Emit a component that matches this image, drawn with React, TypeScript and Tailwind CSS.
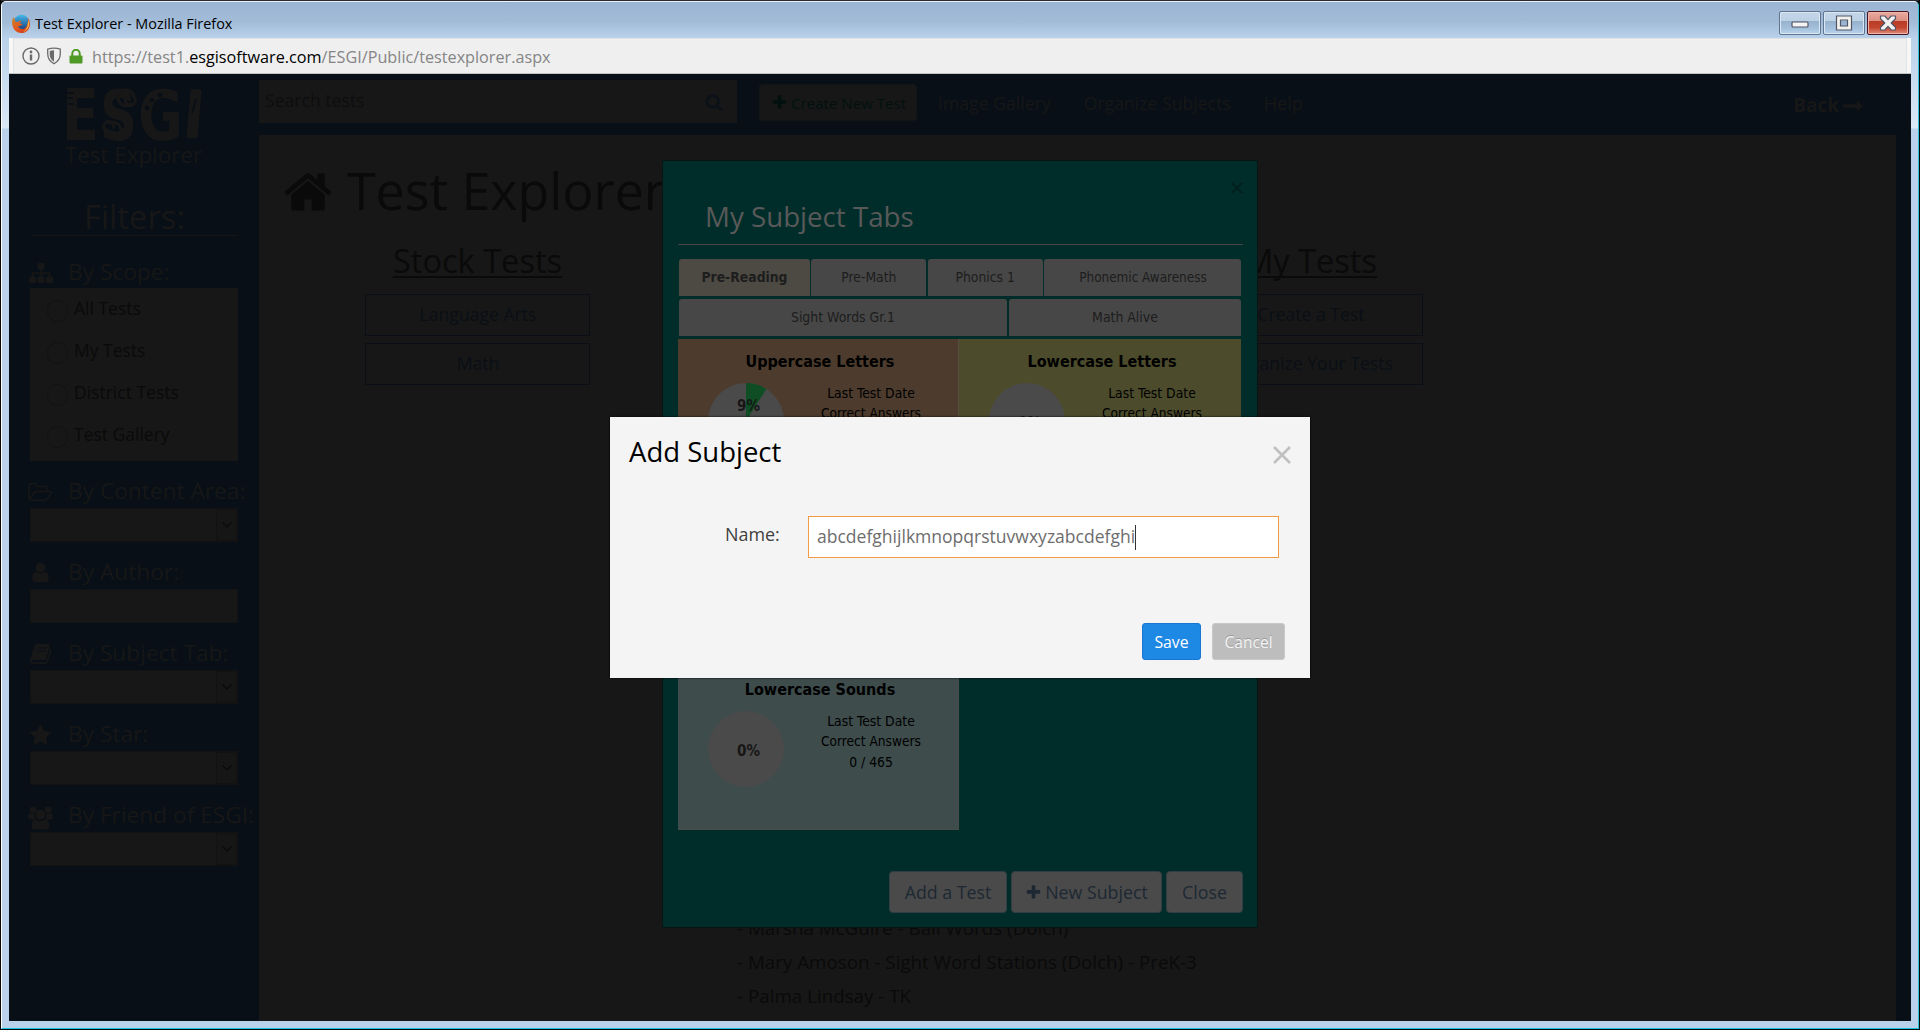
import React from 'react';

const plusPath =
  'M1600 736v192q0 40-28 68t-68 28h-416v416q0 40-28 68t-68 28h-192q-40 0-68-28t-28-68v-416h-416q-40 0-68-28t-28-68v-192q0-40 28-68t68-28h416v-416q0-40 28-68t68-28h192q40 0 68 28t28 68v416h416q40 0 68 28t28 68z';
const searchPath =
  'M1216 832q0-185-131.5-316.5t-316.5-131.5-316.5 131.5-131.5 316.5 131.5 316.5 316.5 131.5 316.5-131.5 131.5-316.5zm512 832q0 52-38 90t-90 38q-54 0-90-38l-343-342q-179 124-399 124-143 0-273.5-55.5t-225-150-150-225-55.5-273.5 55.5-273.5 150-225 225-150 273.5-55.5 273.5 55.5 225 150 150 225 55.5 273.5q0 220-124 399l343 343q37 37 37 90z';
const homePath =
  'M1472 992v480q0 26-19 45t-45 19h-384v-384h-256v384h-384q-26 0-45-19t-19-45v-480q0-1 .5-3t.5-3l575-474 575 474q1 2 1 6zm223-69l-62 74q-8 9-21 11h-3q-13 0-21-7l-692-577-692 577q-12 8-24 7-13-2-21-11l-62-74q-8-10-7-23.5t11-21.5l719-599q32-26 76-26t76 26l244 204v-195q0-14 9-23t23-9h192q14 0 23 9t9 23v408l219 182q10 8 11 21.5t-7 23.5z';
const userPath =
  'M1536 1399q0 109-62.5 187t-150.5 78h-854q-88 0-150.5-78t-62.5-187q0-85 8.5-160.5t31.5-152 58.5-131 94-89 134.5-34.5q131 128 313 128t313-128q76 0 134.5 34.5t94 89 58.5 131 31.5 152 8.5 160.5zm-256-887q0 159-112.5 271.5t-271.5 112.5-271.5-112.5-112.5-271.5 112.5-271.5 271.5-112.5 271.5 112.5 112.5 271.5z';
const starPath =
  'M1728 647q0 22-26 48l-363 354 86 500q1 7 1 20 0 21-10.5 35.5t-30.5 14.5q-19 0-40-12l-449-236-449 236q-22 12-40 12-21 0-31.5-14.5t-10.5-35.5q0-6 2-20l86-500-364-354q-25-27-25-48 0-37 56-46l502-73 225-455q19-41 49-41t49 41l225 455 502 73q56 9 56 46z';

function Glyph({ d, className }: { d: string; className: string }) {
  return (
    <svg viewBox="0 0 1792 1792" className={className} fill="currentColor">
      <path d={d} />
    </svg>
  );
}

function FirefoxIcon() {
  return (
    <svg viewBox="0 0 20 20" className="h-5 w-5">
      <defs>
        <linearGradient id="fox" x1="0" y1="0" x2="1" y2="1">
          <stop offset="0" stopColor="#c8862f" />
          <stop offset="0.5" stopColor="#e2571e" />
          <stop offset="1" stopColor="#c9301c" />
        </linearGradient>
        <linearGradient id="globe" x1="0" y1="0" x2="0" y2="1">
          <stop offset="0" stopColor="#45b8e8" />
          <stop offset="1" stopColor="#173a7d" />
        </linearGradient>
      </defs>
      <circle cx="10.5" cy="8.800" r="8" fill="url(#globe)" />
      <path
        d="M2.200 3.400C1 6 .9 8.300 1.300 11 2.200 15.800 5.800 19 10.300 19c4.700 0 8.300-3.500 8.600-8.300.1-2.900-.7-5.200-2.600-7.200.8 2 1 3.600.5 5.200-.5 3.300-2.700 6.400-5.600 6.300-2.200-.1-3.800-1.300-4.300-3 1 .5 2.100.3 3-.4.6-.5 1.400-.5 1.500-1 0-.6-1-1-2.100-.9-.5-1.200.1-2 1.300-2.900-1.600-.2-2.600.2-3.500 1.200-.9-.4-1.700-.3-2.300-.1C4 6 3.500 5 3.300 3.700z"
        fill="url(#fox)"
      />
      <path d="M18 6.500c1.200 5.500-1.500 10.300-6 11.700 3.300-2.300 4.900-5.500 4.900-9.400z" fill="#f9b63c" />
    </svg>
  );
}

function InfoIcon() {
  return (
    <svg viewBox="0 0 18 18" className="h-[18px] w-[18px]" fill="none" stroke="#6b6b6b" strokeWidth="1.400">
      <circle cx="9" cy="9" r="8" />
      <path d="M9 7.500v6" strokeWidth="2.400" />
      <circle cx="9" cy="5" r="1.400" fill="#6b6b6b" stroke="none" />
    </svg>
  );
}

function ShieldIcon() {
  return (
    <svg viewBox="0 0 16 18" className="h-[18px] w-4">
      <path d="M8 1.200c2.200 0 4.600.4 6.300 1v4.300c0 5-2 8-6.300 10.300C3.700 14.500 1.700 11.500 1.700 6.500V2.200C3.400 1.600 5.800 1.200 8 1.200z" fill="none" stroke="#6b6b6b" strokeWidth="1.300" />
      <path d="M8 3.300c-1.600 0-3.200.2-4.300.6v3c0 3.600 1.400 6 4.300 7.800z" fill="#6b6b6b" />
    </svg>
  );
}

function LockIcon() {
  return (
    <svg viewBox="0 0 14 15" className="h-[15px] w-[14px]">
      <path d="M3.300 8V4.500a3.700 3.700 0 0 1 7.400 0V8" fill="none" stroke="#4f9a27" strokeWidth="2" />
      <rect x=".5" y="6.500" width="13" height="8" rx="1" fill="#4f9a27" />
    </svg>
  );
}

function SitemapIcon() {
  return (
    <svg viewBox="0 0 24 20" className="h-5 w-6" fill="currentColor">
      <rect x="8.500" y="0" width="7" height="6.500" rx="1" />
      <rect x="0" y="13.500" width="7" height="6.500" rx="1" />
      <rect x="8.500" y="13.500" width="7" height="6.500" rx="1" />
      <rect x="17" y="13.500" width="7" height="6.500" rx="1" />
      <path d="M3.500 14v-4h17v4M12 6v8" fill="none" stroke="currentColor" strokeWidth="1.600" />
    </svg>
  );
}

function FolderIcon() {
  return (
    <svg viewBox="0 0 26 20" className="h-5 w-[25px]" fill="none" stroke="currentColor" strokeWidth="1.600" strokeLinejoin="round">
      <path d="M1.200 16.500V3.500q0-2 2-2h4q2 0 2 2v.8h8.500q2 0 2 2v3.200" />
      <path d="M1.500 17.500l5.200-6.800q1-1.200 2.500-1.200h14q2.200 0 1 1.700l-4.600 6q-1 1.300-2.600 1.300H3q-1.800 0-1.800-2" />
    </svg>
  );
}

function BookIcon() {
  return (
    <svg viewBox="0 0 22 20" className="h-5 w-[22px]">
      <path d="M7 0h11.500q1.800 0 1.300 1.800l-3.700 12.600q-.5 1.600-2.200 1.600H4q-2 0-2 1.300 0 1 1.800 1H15q1 0 1.400-1.200L20.300 4q1.500.7 1 2.200l-3.600 12q-.6 1.800-2.500 1.800H3.700Q0 20 0 16.500L4 2.300Q4.700 0 7 0z" fill="currentColor" />
      <path d="M8.500 4h8M7.600 7h8" stroke="#080f16" strokeWidth="1.100" />
    </svg>
  );
}

function UsersIcon() {
  return (
    <svg viewBox="0 0 25 24" className="h-6 w-[25px]" fill="currentColor">
      <circle cx="5" cy="4" r="3.400" />
      <circle cx="20" cy="4" r="3.400" />
      <path d="M2 7q3 1.800 5 .6Q6 11 7.500 13.500H3Q0 13.500 0 11q0-3 2-4zM23 7q-3 1.800-5 .6.9 3.400-.5 5.900H22q3 0 3-2.500 0-3-2-4z" />
      <circle cx="12.500" cy="8.700" r="4.900" />
      <path d="M7.600 13q2 2 4.900 2t4.900-2q4 .5 4 7.300 0 3.200-3.200 3.200H6.800q-3.200 0-3.200-3.200Q3.600 13.500 7.600 13z" />
    </svg>
  );
}

function Logo() {
  return (
    <svg viewBox="0 0 140 54" className="ml-[57px] mt-[13px] h-[54px] w-[140px] shrink-0 overflow-visible font-['DejaVu_Sans']" fill="#171717" fontWeight="bold">
      <text x="-4" y="53" fontSize="71" textLength="37" lengthAdjust="spacingAndGlyphs">E</text>
      <text x="34" y="53" fontSize="70" textLength="37" lengthAdjust="spacingAndGlyphs">S</text>
      <text x="72" y="53" fontSize="69" textLength="45" lengthAdjust="spacingAndGlyphs">G</text>
      <text x="117" y="51" fontSize="67" textLength="22" lengthAdjust="spacingAndGlyphs" transform="rotate(5 128 27)">I</text>
      <g fill="none" stroke="#171717" strokeWidth="3">
        <path d="M66 16a8 8 0 1 1 2-6 5 5 0 1 1-8 1" />
        <path d="M42 37a8 8 0 1 1-3 6 5 5 0 1 1 8-1" />
      </g>
      <g fill="#080f16">
        <circle cx="81" cy="21" r="2.200" />
        <circle cx="86" cy="13" r="2.200" />
        <circle cx="94" cy="8" r="2.200" />
      </g>
      <path d="M1 6h7M0 11h7M2 17h6M130 12l-4 14" stroke="#080f16" strokeWidth="1.800" />
    </svg>
  );
}

function TitleBar() {
  const frame =
    'flex h-6 w-[42px] items-center justify-center rounded-[2px] border border-[#5f7590] bg-[linear-gradient(#c3d6e9_0%,#bdd1e5_42%,#98b2ce_43%,#a3c0dc_75%,#bad4ec_100%)] shadow-[inset_0_0_0_1px_#dbe8f4]';
  return (
    <div className="flex h-9 shrink-0 items-center bg-linear-to-b from-[#9ab4d3] via-[#a2bcd8] via-55% to-[#b9d1ea] pr-[9px] pl-[9px]">
      <div className="mt-[7px]"><FirefoxIcon /></div>
      <div className="mt-[8px] ml-[4px] text-[14.4px] leading-5 whitespace-pre text-black">Test Explorer - Mozilla Firefox</div>
      <div className="mt-[6px] ml-auto flex gap-[2px]">
        <div className={frame}>
          <svg viewBox="0 0 18 8" className="mt-[3px] h-2 w-[18px]"><rect x="1" y="1" width="16" height="5" rx="1" fill="#f4f4f4" stroke="#535666" strokeWidth="1.200" /></svg>
        </div>
        <div className={frame}>
          <svg viewBox="0 0 18 16" className="-mt-[1px] h-4 w-[18px]"><path fillRule="evenodd" d="M1.500 1h15v14h-15zM5.500 5v6h7V5z" fill="#f1f1ee" stroke="#535666" strokeWidth="1.200" /></svg>
        </div>
        <div className="flex h-6 w-[42px] items-center justify-center rounded-[2px] border border-[#4a1420] bg-[linear-gradient(#e8aba1_0%,#dd8d80_42%,#b83c26_43%,#c2452d_70%,#e08b78_100%)] shadow-[inset_0_0_0_1px_#eeb5ab]">
          <svg viewBox="0 0 18 16" className="-mt-[1px] h-4 w-[18px]"><path d="M1.500 1h4.300L9 4.600 12.200 1h4.300v2.800L12.200 8l4.300 4.200V15h-4.300L9 11.400 5.800 15H1.500v-2.800L5.800 8 1.500 3.800z" fill="#f3f1f1" stroke="#535666" strokeWidth="1.200" strokeLinejoin="round" /></svg>
        </div>
      </div>
    </div>
  );
}

function AddressBar() {
  return (
    <div className="flex h-9 shrink-0 border-b border-[#c3c3c3] bg-[#f7f7f7] px-1">
      <div className="flex flex-1 items-center border-x border-t border-[#e2e2e2] bg-[#efefef] pl-2">
        <InfoIcon />
        <div className="ml-[6px]"><ShieldIcon /></div>
        <div className="ml-[7px]"><LockIcon /></div>
        <div className="mt-[2px] ml-[9px] text-[16.22px] leading-6 text-[#858585]">
          https://test1.<span className="text-black">esgisoftware.com</span>/ESGI/Public/testexplorer.aspx
        </div>
      </div>
    </div>
  );
}

function FilterLabel({ icon, children }: { icon: React.ReactNode; children: React.ReactNode }) {
  return (
    <div className="flex h-[33px] pl-5">
      <div className="mt-[8px] -ml-[1px] flex w-[25px] justify-center">{icon}</div>
      <div className="mt-px ml-[15px] text-[22.7px] leading-8 whitespace-nowrap">{children}</div>
    </div>
  );
}

function SelectBox({ arrow = true }: { arrow?: boolean }) {
  return (
    <div className="mt-px ml-[21px] flex h-[34px] w-[208px] justify-end border border-[#131313] bg-[#171717]">
      {arrow && (
        <div className="flex w-[21px] items-center justify-center border border-[#121212] bg-[#161616]">
          <svg viewBox="0 0 10 6" className="h-[6px] w-[10px]" fill="none" stroke="#090909" strokeWidth="1.100"><path d="M.5.500L5 5 9.500.500" /></svg>
        </div>
      )}
    </div>
  );
}

function Sidebar() {
  return (
    <aside className="flex w-[250px] shrink-0 flex-col text-[#171717]">
      <Logo />
      <div className="pr-[1px] text-center text-[22.4px] leading-7">Test Explorer</div>
      <div className="mt-[27px] ml-[23px] h-10 w-[205px] border-b border-[#171717] text-center text-[32.8px] leading-[42px]">Filters:</div>
      <div className="mt-[19px]">
        <FilterLabel icon={<SitemapIcon />}>By Scope:</FilterLabel>
        <div className="ml-[21px] h-[173px] w-[208px] bg-[#171717] pt-[1px]">
          {['All Tests', 'My Tests', 'District Tests', 'Test Gallery'].map((t) => (
            <div key={t} className="flex h-[42px] pl-[17px]">
              <div className="mt-[11px] h-[22px] w-[21px] rounded-full border border-[#121212]" />
              <div className="ml-[6px] text-[17.5px] leading-[39px] text-[#0a0a0a]">{t}</div>
            </div>
          ))}
        </div>
      </div>
      <div className="mt-[13px]">
        <FilterLabel icon={<FolderIcon />}>By Content Area:</FilterLabel>
        <SelectBox />
      </div>
      <div className="mt-[13px]">
        <FilterLabel icon={<Glyph d={userPath} className="-mt-[2px] h-[23px] w-[23px] shrink-0" />}>By Author:</FilterLabel>
        <SelectBox arrow={false} />
      </div>
      <div className="mt-[13px]">
        <FilterLabel icon={<BookIcon />}>By Subject Tab:</FilterLabel>
        <SelectBox />
      </div>
      <div className="mt-[13px]">
        <FilterLabel icon={<Glyph d={starPath} className="-mt-[1px] h-[23px] w-[23px] shrink-0" />}>By Star:</FilterLabel>
        <SelectBox />
      </div>
      <div className="mt-[13px]">
        <FilterLabel icon={<UsersIcon />}>By Friend of ESGI:</FilterLabel>
        <SelectBox />
      </div>
    </aside>
  );
}

function Header() {
  return (
    <header className="flex h-[61px] shrink-0 items-start text-[17.65px] text-[#171717]">
      <div className="mt-[6px] flex h-[43px] w-[478px] justify-between bg-[#171717] pr-[14px] pl-[6px] text-[17.6px] leading-10 text-[#0e0e0e]">
        <span>Search tests</span>
        <Glyph d={searchPath} className="mt-[13px] h-[18px] w-[18px] text-[#0a1119]" />
      </div>
      <div className="mt-[10px] ml-[22px] flex h-[37px] w-[158px] rounded-[3px] border border-[#121517] bg-[#171717] pl-[11px] text-[15.1px] leading-[37px] text-[#02110f]">
        <Glyph d={plusPath} className="mt-[9px] h-[17px] w-[17px]" />
        <span className="ml-[3px]">Create New Test</span>
      </div>
      <nav className="flex leading-[58px]">
        <span className="ml-[21px]">Image Gallery</span>
        <span className="ml-[33px]">Organize Subjects</span>
        <span className="ml-[33px] text-[18px]">Help</span>
      </nav>
      <div className="mr-[48px] ml-auto flex items-center text-[19px] leading-[62px] font-bold">
        Back
        <svg viewBox="0 0 20 12" className="mt-[2px] ml-1 h-3 w-5" fill="currentColor"><path d="M0 4.300h14V.5l6 5.500-6 5.500V7.700H0z" /></svg>
      </div>
    </header>
  );
}

function TestColumn({ title, items }: { title: string; items: string[] }) {
  return (
    <div className="flex w-[225px] flex-col gap-[7px]">
      <h2 className="mb-[5px] h-[44px] text-center text-[32.6px] leading-[46px] text-[#0a0a0a] underline decoration-2 underline-offset-[3px] [text-decoration-skip-ink:none]">{title}</h2>
      {items.map((t) => (
        <div key={t} className="h-[42px] border border-[#0a0f15] pl-px text-center text-[17.6px] leading-[39px] text-[#0a0f15]">{t}</div>
      ))}
    </div>
  );
}

function MainPanel() {
  return (
    <main className="mr-[15px] flex-1 overflow-hidden bg-[#171717]">
      <h1 className="mt-[25px] ml-[23px] flex h-[60px] text-[51.9px] leading-[60px] whitespace-nowrap text-[#0a0a0a]">
        <Glyph d={homePath} className="mt-[6px] h-[52px] w-[52px]" />
        <span className="ml-[13px]">Test Explorer</span>
      </h1>
      <div className="mt-[18px] ml-[106px] flex gap-[608px]">
        <TestColumn title="Stock Tests" items={['Language Arts', 'Math']} />
        <TestColumn title="My Tests" items={['Create a Test', 'Organize Your Tests']} />
      </div>
      <div className="mt-[526px] ml-[478px] text-[18.8px] leading-[34px] text-[#0a0a0a]">
        <div>- Marsha McGuire - Ball Words (Dolch)</div>
        <div>- Mary Amoson - Sight Word Stations (Dolch) - PreK-3</div>
        <div>- Palma Lindsay - TK</div>
      </div>
    </main>
  );
}

function SubjectCard({ title, pct, total, className, shift }: { title: string; pct: number; total?: string; className: string; shift?: boolean }) {
  return (
    <div className={className}>
      <div className="h-11 pt-[12px] pl-[4px] text-center text-[16px] leading-[22px] font-bold text-black">{title}</div>
      <div className="flex">
        <div className="relative ml-[30px] h-[76px] w-[76px]">
          <svg viewBox="0 0 76 76" className="h-[76px] w-[76px]">
            <circle cx="38" cy="38" r="38" fill="#4b4a4a" />
            {pct > 0 && <path d="M38 38V0A38 38 0 0 1 58.400 5.900z" fill="#0f4d24" />}
          </svg>
          <div className={'absolute left-0 w-[81px] text-center text-[15px] leading-5 font-bold text-[#161616] ' + (shift ? 'top-[13px]' : 'top-[30px]')}>{pct}%</div>
        </div>
        <div className="w-[174px] text-center text-[13.8px] leading-[20.4px] text-black">
          <div>Last Test Date</div>
          <div className="text-[13.6px]">Correct Answers</div>
          {total && <div>{total}</div>}
        </div>
      </div>
    </div>
  );
}

function SubjectTabsDialog() {
  const tab = 'h-[37px] rounded-t-[3px] bg-[#474747] text-center leading-[37px] text-[#1d1d1d]';
  const btn = 'flex h-[42px] items-center justify-center rounded border border-[#333e43] bg-[#4a4a4a] text-[17.8px] text-[#1d2833]';
  return (
    <section className="absolute top-[160px] left-[662px] h-[768px] w-[596px] border border-[#0b1514] bg-[#002d2a] pr-[14px] pl-[15px]">
      <svg viewBox="0 0 12 12" className="absolute top-[21px] right-[14px] h-3 w-3" stroke="#011f1d" strokeWidth="1.800"><path d="M.7.700l10.600 10.600M11.300.700L.7 11.300" /></svg>
      <h2 className="mt-[35px] h-[49px] border-b border-[#4d4646] pl-[27px] text-[27.7px] leading-10 text-[#595959]">My Subject Tabs</h2>
      <div className="mt-[14px] ml-[1px] w-[562px] font-['DejaVu_Sans_Condensed']">
        <div className="flex justify-between text-[13.8px]">
          <div className={tab + ' w-[131px] bg-[#4c4a43]! font-bold'}>Pre-Reading</div>
          <div className={tab + ' w-[115px]'}>Pre-Math</div>
          <div className={tab + ' w-[115px]'}>Phonics 1</div>
          <div className={tab + ' w-[197px] pl-px text-[13.400px]'}>Phonemic Awareness</div>
        </div>
        <div className="mt-[3px] flex justify-between text-[13.9px]">
          <div className={tab + ' w-[328px]'}>Sight Words Gr.1</div>
          <div className={tab + ' w-[232px]'}>Math Alive</div>
        </div>
      </div>
      <div className="mt-[3px] grid w-[563px] grid-cols-[281px_282px] grid-rows-[164px_164px_163px] font-['DejaVu_Sans_Condensed']">
        <SubjectCard title="Uppercase Letters" pct={9} className="border-r border-[#574c43] bg-[#4d3c2e]" shift />
        <SubjectCard title="Lowercase Letters" pct={0} className="bg-[#4c4c2c]" />
        <div className="col-span-2 bg-[#3e4c4c]" />
        <SubjectCard title="Lowercase Sounds" pct={0} total="0 / 465" className="border-r border-b border-[#4a4c4c] bg-[#3e4c4c]" />
      </div>
      <div className="mt-[41px] flex justify-end gap-1">
        <div className={btn + ' w-[118px]'}>Add a Test</div>
        <div className={btn + ' w-[151px]'}>
          <Glyph d={plusPath} className="mr-[3px] h-[17px] w-[17px]" />
          New Subject
        </div>
        <div className={btn + ' w-[77px]'}>Close</div>
      </div>
    </section>
  );
}

function AddSubjectDialog() {
  return (
    <section className="absolute top-[417px] left-[610px] flex h-[261px] w-[700px] flex-col bg-[#f4f4f4] shadow-[0_0_2px_#000]">
      <div className="flex h-[99px] justify-between pt-[15px] pr-[19px] pl-[19px]">
        <h3 className="text-[27.5px] leading-10 text-black">Add Subject</h3>
        <svg viewBox="0 0 18 18" className="mt-[14px] h-[18px] w-[18px]" stroke="#c0c0c0" strokeWidth="2.600"><path d="M1 1l16 16M17 1L1 17" /></svg>
      </div>
      <div className="flex pl-[113px]">
        <label className="w-[85px] pl-[2px] text-[17.9px] leading-[37px] text-[#404040]">Name:</label>
        <div className="flex h-[42px] w-[471px] items-center border border-[#f29b45] bg-white pl-2 text-[17.55px] text-[#6d6d6d]">
          <span className="h-[41px] leading-[39px]">abcdefghijlkmnopqrstuvwxyzabcdefghi</span>
          <span className="h-[25px] w-px shrink-0 bg-[#333]" />
        </div>
      </div>
      <div className="mt-[65px] flex justify-end gap-[11px] pr-[25px] text-[15.8px] leading-9">
        <div className="h-[37px] w-[59px] rounded-[3px] border border-[#1976d2] bg-[#1e88e5] text-center text-white">Save</div>
        <div className="h-[37px] w-[73px] rounded-[3px] border border-[#c8c8c8] bg-[#bdbdbd] text-center text-[15.600px] text-[#f4f4f4] [text-shadow:0_-1px_0_#999]">Cancel</div>
      </div>
    </section>
  );
}

export default function App() {
  return (
    <div className="relative flex h-[1030px] w-[1920px] flex-col overflow-hidden bg-[#070b0e] pr-px pb-px pl-px font-['Open_Sans',sans-serif]">
      <div className="h-px shrink-0 bg-[#2b2a30]" />
      <div className="flex flex-1 flex-col overflow-hidden rounded-t-[5px] border border-t-[#eaf2fa] border-r-[#2fc4dc] border-b-[#17c3dd] border-l-white bg-[#b9d1ea]">
        <TitleBar />
        <div className="flex flex-1 bg-[linear-gradient(#b9d1ea_0,#dbe8f6_90px,#b9d1ea_91px)] pr-[7px] pb-[7px] pl-[7px]">
          <div className="flex h-[983px] flex-1 flex-col">
            <AddressBar />
            <div className="flex flex-1 bg-[#080f16]">
              <Sidebar />
              <div className="flex flex-1 flex-col">
                <Header />
                <MainPanel />
              </div>
            </div>
          </div>
        </div>
      </div>
      <SubjectTabsDialog />
      <AddSubjectDialog />
    </div>
  );
}
